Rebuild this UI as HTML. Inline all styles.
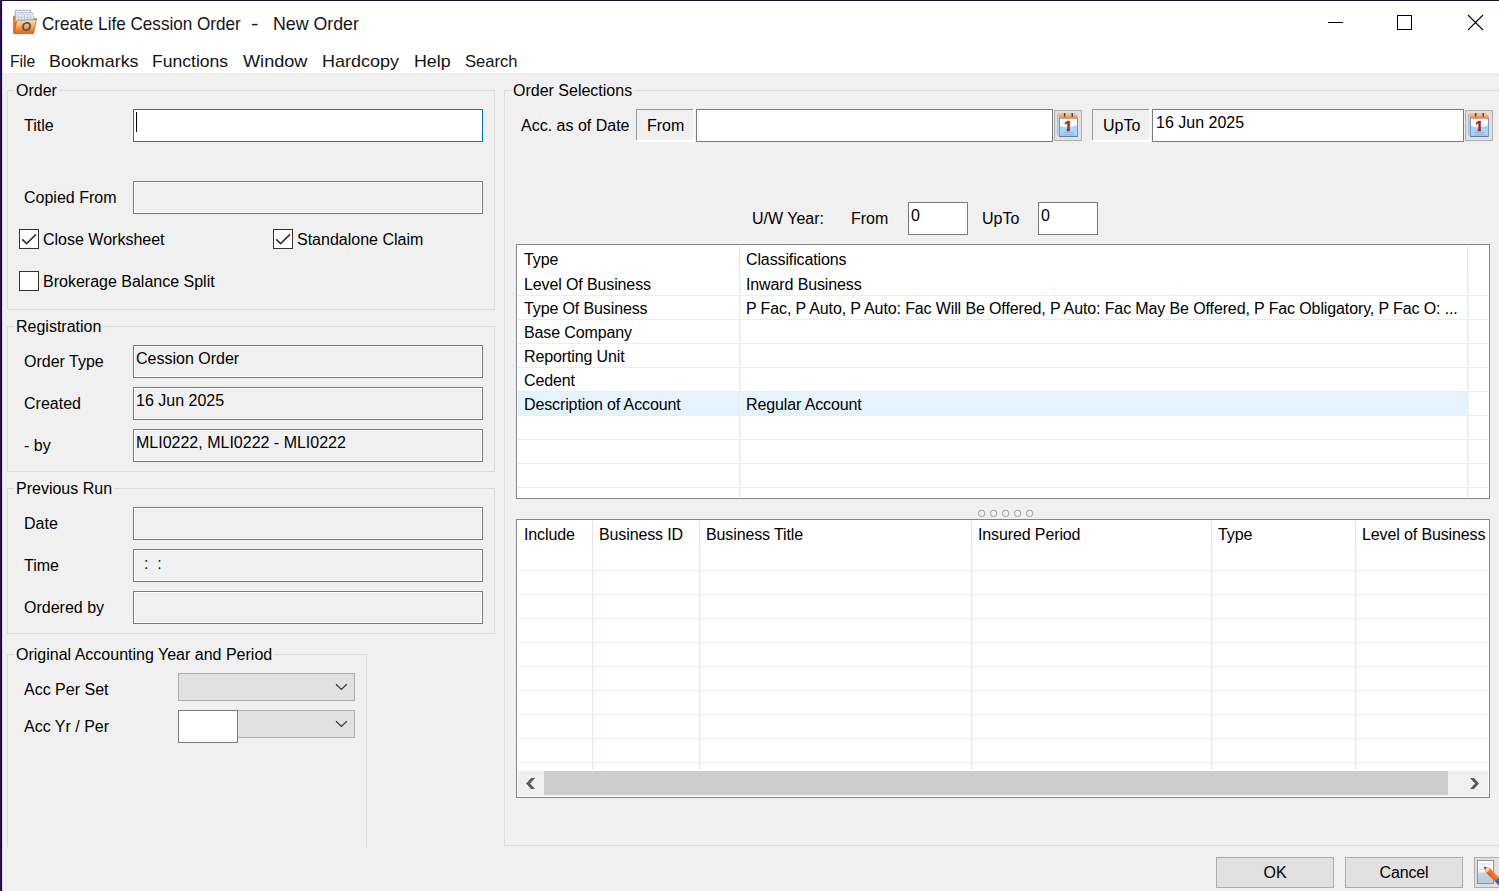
<!DOCTYPE html>
<html lang="en"><head><meta charset="utf-8"><title>Create Life Cession Order - New Order</title>
<style>
*{box-sizing:border-box;margin:0;padding:0}
html,body{width:1499px;height:891px;overflow:hidden;background:#f0f0f0}
body{position:relative;font-family:"Liberation Sans",sans-serif;font-size:16px;color:#000}
.a{position:absolute}
.t{position:absolute;white-space:nowrap;line-height:18px;height:18px;font-size:16px;color:#000}
.gb{position:absolute;border:1px solid #dcdcdc}
.gl{position:absolute;white-space:nowrap;line-height:18px;font-size:16px;background:#f0f0f0;padding:0 2px}
.ro{position:absolute;border:1px solid #7a7a7a;background:#f0f0f0;height:33px;box-shadow:inset 0 0 0 1px #fff}
.in{position:absolute;border:1px solid #7a7a7a;background:#fff}
.cb{position:absolute;width:20px;height:20px;border:1px solid #333;background:#fff}
.cmb{position:absolute;border:1px solid #adadad;background:#e1e1e1}
.btn{position:absolute;border:1px solid #adadad;background:#e1e1e1;text-align:center;font-size:16px}
.grid{position:absolute;border:1px solid #828790;background:#fff;overflow:hidden}
.hl{position:absolute;height:1px;background:#ededed}
.vl{position:absolute;width:2px;background:linear-gradient(90deg,#e2edf9 0,#e2edf9 50%,#f1f6fc 50%,#f1f6fc 100%)}
.vh{position:absolute;width:1px;background:#e5e5e5}
.g{letter-spacing:-0.12px}
.tt{font-family:"Liberation Sans",sans-serif}
</style></head>
<body>
<div class="a" style="left:0;top:0;width:1499px;height:73px;background:#fff"></div>
<div class="a" style="left:0;top:0;width:1499px;height:1px;background:#1b1033"></div>
<div class="a" style="left:0;top:0;width:3px;height:891px;background:linear-gradient(90deg,#2a0e52 0,#2a0e52 1px,#150e22 1px,#150e22 2px,rgba(30,25,40,0.10) 2px)"></div>
<svg class="a" style="left:12px;top:9px" width="26" height="26" viewBox="0 0 26 26">
<defs><linearGradient id="fo" x1="0" y1="0" x2="0" y2="1"><stop offset="0" stop-color="#ffe2bc"/><stop offset="0.5" stop-color="#fca458"/><stop offset="0.8" stop-color="#f07818"/><stop offset="1" stop-color="#e8640c"/></linearGradient>
<linearGradient id="sh" x1="0" y1="0" x2="0" y2="1"><stop offset="0" stop-color="#ffffff"/><stop offset="1" stop-color="#b8dcf8"/></linearGradient></defs>
<path d="M1.4 8.2 Q1.4 6.9 2.6 6.9 L4.2 6.9 L4.2 24.2 L2 24.4 Q1.4 24.4 1.4 23.6 Z" fill="#e8751c" stroke="#9c6a4c" stroke-width="0.6"/>
<path d="M21.6 9.2 L24 9.4 Q24.8 9.6 24.6 10.8 L21.6 11.4 Z" fill="#d8681c" stroke="#9c6a4c" stroke-width="0.5"/>
<rect x="3.3" y="1.3" width="15.4" height="12" rx="0.6" fill="#fff" stroke="#8494b4" stroke-width="0.8"/>
<path d="M6.6 1.6v2M9.6 1.6v2M12.6 1.6v2M15.6 1.6v2" stroke="#c0d0f0" stroke-width="0.6"/>
<rect x="5" y="3.5" width="15.6" height="11" rx="0.6" fill="#eef6ff" stroke="#a0aecc" stroke-width="0.7"/>
<path d="M8.2 3.8v2M11.2 3.8v2M14.2 3.8v2M17.2 3.8v2" stroke="#a8c0f0" stroke-width="0.6"/>
<rect x="6.6" y="5.6" width="15.2" height="9" rx="0.5" fill="url(#sh)" stroke="#a8b8d4" stroke-width="0.6"/>
<path d="M9.6 5.8v6M12.6 5.8v6M15.6 5.8v6M18.6 5.8v6M6.8 8.3h14.8" stroke="#88a8ec" stroke-width="0.7" opacity="0.75"/>
<path d="M4.9 11.4 L24.3 10.6 L21.8 24.2 Q21.7 24.7 21 24.7 L2.6 24.7 Q2 24.7 2.1 24 Z" fill="url(#fo)" stroke="#9a6c54" stroke-width="0.7" stroke-linejoin="round"/>
<text x="14" y="22.1" font-size="12.4" font-style="italic" font-weight="bold" fill="#44546c" text-anchor="middle" style="font-family:'Liberation Sans',sans-serif">O</text>
</svg>
<div class="t" style="left:41.8px;top:12px;font-size:18.5px;line-height:24px;height:24px;color:#141414;transform-origin:0 0;transform:scaleX(0.925)">Create Life Cession Order</div>
<div class="t" style="left:250.6px;top:12px;font-size:18.5px;line-height:24px;height:24px;color:#141414;transform-origin:0 0;transform:scaleX(1.2)">-</div>
<div class="t" style="left:273px;top:12px;font-size:18.5px;line-height:24px;height:24px;color:#141414;transform-origin:0 0;transform:scaleX(0.96)">New Order</div>
<div class="a" style="left:1328px;top:22px;width:15px;height:1px;background:#000"></div>
<div class="a" style="left:1397px;top:15px;width:15px;height:15px;border:1px solid #000"></div>
<svg class="a" style="left:1467px;top:14px" width="17" height="17" viewBox="0 0 17 17"><path d="M1 1L16 16M16 1L1 16" stroke="#000" stroke-width="1.1" fill="none"/></svg>
<div class="t" style="left:9.5px;top:50px;font-size:17px;line-height:24px;height:24px;color:#141414;transform-origin:0 0;transform:scaleX(0.923)">File</div>
<div class="t" style="left:48.9px;top:50px;font-size:17px;line-height:24px;height:24px;color:#141414;transform-origin:0 0;transform:scaleX(1.053)">Bookmarks</div>
<div class="t" style="left:151.9px;top:50px;font-size:17px;line-height:24px;height:24px;color:#141414;transform-origin:0 0;transform:scaleX(1.033)">Functions</div>
<div class="t" style="left:242.5px;top:50px;font-size:17px;line-height:24px;height:24px;color:#141414;transform-origin:0 0;transform:scaleX(1.066)">Window</div>
<div class="t" style="left:322px;top:50px;font-size:17px;line-height:24px;height:24px;color:#141414;transform-origin:0 0;transform:scaleX(1.06)">Hardcopy</div>
<div class="t" style="left:414.4px;top:50px;font-size:17px;line-height:24px;height:24px;color:#141414;transform-origin:0 0;transform:scaleX(1.048)">Help</div>
<div class="t" style="left:464.5px;top:50px;font-size:17px;line-height:24px;height:24px;color:#141414;transform-origin:0 0;transform:scaleX(0.975)">Search</div>
<div class="gb" style="left:7px;top:90px;width:488px;height:220px"></div>
<div class="gl" style="left:14px;top:82px">Order</div>
<div class="gb" style="left:7px;top:326px;width:488px;height:146px"></div>
<div class="gl" style="left:14px;top:318px">Registration</div>
<div class="gb" style="left:7px;top:488px;width:488px;height:146px"></div>
<div class="gl" style="left:14px;top:480px">Previous Run</div>
<div class="gb" style="left:7px;top:654px;width:360px;height:193px;border-bottom:none"></div>
<div class="gl" style="left:14px;top:646px">Original Accounting Year and Period</div>
<div class="t" style="left:24px;top:117px;">Title</div>
<div class="in" style="left:133px;top:109px;width:350px;height:33px;border-color:#0078d7"></div>
<div class="a" style="left:136px;top:112px;width:1px;height:20px;background:#000"></div>
<div class="t" style="left:24px;top:189px;">Copied From</div>
<div class="ro" style="left:133px;top:181px;width:350px;height:33px"></div>
<div class="cb" style="left:19px;top:229px"></div>
<svg class="a" style="left:19px;top:229px" width="20" height="20" viewBox="0 0 20 20"><path d="M3.2 10.4L7.6 14.6L17 5.4" stroke="#333" stroke-width="1.6" fill="none"/></svg>
<div class="t" style="left:43px;top:231px;">Close Worksheet</div>
<div class="cb" style="left:273px;top:229px"></div>
<svg class="a" style="left:273px;top:229px" width="20" height="20" viewBox="0 0 20 20"><path d="M3.2 10.4L7.6 14.6L17 5.4" stroke="#333" stroke-width="1.6" fill="none"/></svg>
<div class="t" style="left:297px;top:231px;">Standalone Claim</div>
<div class="cb" style="left:19px;top:271px"></div>
<div class="t" style="left:43px;top:273px;">Brokerage Balance Split</div>
<div class="t" style="left:24px;top:353px;">Order Type</div>
<div class="ro" style="left:133px;top:345px;width:350px;height:33px"></div>
<div class="t" style="left:136px;top:350px;">Cession Order</div>
<div class="t" style="left:24px;top:395px;">Created</div>
<div class="ro" style="left:133px;top:387px;width:350px;height:33px"></div>
<div class="t" style="left:136px;top:392px;">16 Jun 2025</div>
<div class="t" style="left:24px;top:437px;">- by</div>
<div class="ro" style="left:133px;top:429px;width:350px;height:33px"></div>
<div class="t" style="left:136px;top:434px;">MLI0222, MLI0222 - MLI0222</div>
<div class="t" style="left:24px;top:515px;">Date</div>
<div class="ro" style="left:133px;top:507px;width:350px;height:33px"></div>
<div class="t" style="left:24px;top:557px;">Time</div>
<div class="ro" style="left:133px;top:549px;width:350px;height:33px"></div>
<div class="t" style="left:144px;top:555px;word-spacing:-0.1px;color:#1a1a1a">:&nbsp; :</div>
<div class="t" style="left:24px;top:599px;">Ordered by</div>
<div class="ro" style="left:133px;top:591px;width:350px;height:33px"></div>
<div class="t" style="left:24px;top:681px;">Acc Per Set</div>
<div class="cmb" style="left:178px;top:673px;width:177px;height:28px"></div>
<svg class="a" style="left:334px;top:682px" width="14" height="10" viewBox="0 0 14 10"><path d="M2 2.2L7.4 7.4L12.8 2.2" stroke="#333" stroke-width="1.2" fill="none"/></svg>
<div class="t" style="left:24px;top:718px;">Acc Yr / Per</div>
<div class="cmb" style="left:237px;top:710px;width:118px;height:28px"></div>
<svg class="a" style="left:334px;top:719px" width="14" height="10" viewBox="0 0 14 10"><path d="M2 2.2L7.4 7.4L12.8 2.2" stroke="#333" stroke-width="1.2" fill="none"/></svg>
<div class="in" style="left:178px;top:710px;width:60px;height:33px"></div>
<div class="gb" style="left:504px;top:90px;width:1001px;height:756px"></div>
<div class="gl" style="left:511px;top:82px">Order Selections</div>
<div class="a" style="left:504px;top:845px;width:995px;height:1px;background:#dcdcdc"></div>
<div class="t" style="left:521px;top:117px;">Acc. as of Date</div>
<div class="a" style="left:636px;top:109px;width:57px;height:1px;background:#9a9a9a"></div>
<div class="a" style="left:636px;top:109px;width:1px;height:31px;background:#9a9a9a"></div>
<div class="a" style="left:636px;top:140px;width:59px;height:2px;background:#fff"></div>
<div class="a" style="left:693px;top:109px;width:2px;height:31px;background:#f9f9f9"></div>
<div class="t" style="left:647px;top:117px;">From</div>
<div class="in" style="left:696px;top:109px;width:357px;height:33px"></div>
<div class="btn" style="left:1054px;top:110px;width:28px;height:31px"></div>
<svg class="a" style="left:1057px;top:113px" width="22" height="25" viewBox="0 0 22 25">
<defs><linearGradient id="cg1" x1="0" y1="0" x2="0" y2="1"><stop offset="0" stop-color="#ffffff"/><stop offset="1" stop-color="#e6effa"/></linearGradient>
<linearGradient id="co1" x1="0" y1="0" x2="0" y2="1"><stop offset="0" stop-color="#fbb47c"/><stop offset="1" stop-color="#f98528"/></linearGradient>
<clipPath id="cc1"><rect x="0" y="0" width="22" height="15.9"/><rect x="9.7" y="15.9" width="3.2" height="3"/></clipPath></defs>
<path d="M0.5 2 L2.6 3.4 L2.6 23.4 L0.5 21.8 Z" fill="#b4cfea" stroke="#8ea6c4" stroke-width="0.5"/>
<rect x="0.9" y="0.4" width="17.8" height="2.4" fill="#f7c49c" stroke="#d8a078" stroke-width="0.4"/>
<rect x="2.5" y="5" width="17.9" height="18.5" fill="url(#cg1)" stroke="#6483ad" stroke-width="0.8"/>
<path d="M2.9 13 Q11.4 15.6 20 12.6 L20 23.1 L2.9 23.1 Z" fill="#a6d4fd"/>
<path d="M2.5 23.4h17.9" stroke="#557aa8" stroke-width="0.9"/>
<rect x="2.3" y="1.9" width="18.3" height="3.4" fill="url(#co1)"/>
<path d="M2.3 5.2h18.3" stroke="#e07830" stroke-width="0.5"/>
<rect x="6.9" y="0" width="1.5" height="3.7" fill="#3c4550"/><rect x="14.5" y="0" width="1.5" height="3.7" fill="#3c4550"/>
<path d="M6.5 19.5h10M6.5 21.4h10" stroke="#84a8d0" stroke-width="0.7"/>
<text x="11.2" y="17.9" font-size="14.5" font-weight="bold" fill="#a42a16" stroke="#a42a16" stroke-width="0.5" text-anchor="middle" clip-path="url(#cc1)" style="font-family:'Liberation Sans',sans-serif">1</text>
</svg>
<div class="a" style="left:1092px;top:109px;width:57px;height:1px;background:#9a9a9a"></div>
<div class="a" style="left:1092px;top:109px;width:1px;height:31px;background:#9a9a9a"></div>
<div class="a" style="left:1092px;top:140px;width:59px;height:2px;background:#fff"></div>
<div class="a" style="left:1149px;top:109px;width:2px;height:31px;background:#f9f9f9"></div>
<div class="t" style="left:1103px;top:117px;">UpTo</div>
<div class="in" style="left:1152px;top:109px;width:312px;height:33px"></div>
<div class="t" style="left:1156px;top:114px;">16 Jun 2025</div>
<div class="btn" style="left:1465px;top:110px;width:28px;height:31px"></div>
<svg class="a" style="left:1468px;top:113px" width="22" height="25" viewBox="0 0 22 25">
<defs><linearGradient id="cg2" x1="0" y1="0" x2="0" y2="1"><stop offset="0" stop-color="#ffffff"/><stop offset="1" stop-color="#e6effa"/></linearGradient>
<linearGradient id="co2" x1="0" y1="0" x2="0" y2="1"><stop offset="0" stop-color="#fbb47c"/><stop offset="1" stop-color="#f98528"/></linearGradient>
<clipPath id="cc2"><rect x="0" y="0" width="22" height="15.9"/><rect x="9.7" y="15.9" width="3.2" height="3"/></clipPath></defs>
<path d="M0.5 2 L2.6 3.4 L2.6 23.4 L0.5 21.8 Z" fill="#b4cfea" stroke="#8ea6c4" stroke-width="0.5"/>
<rect x="0.9" y="0.4" width="17.8" height="2.4" fill="#f7c49c" stroke="#d8a078" stroke-width="0.4"/>
<rect x="2.5" y="5" width="17.9" height="18.5" fill="url(#cg2)" stroke="#6483ad" stroke-width="0.8"/>
<path d="M2.9 13 Q11.4 15.6 20 12.6 L20 23.1 L2.9 23.1 Z" fill="#a6d4fd"/>
<path d="M2.5 23.4h17.9" stroke="#557aa8" stroke-width="0.9"/>
<rect x="2.3" y="1.9" width="18.3" height="3.4" fill="url(#co2)"/>
<path d="M2.3 5.2h18.3" stroke="#e07830" stroke-width="0.5"/>
<rect x="6.9" y="0" width="1.5" height="3.7" fill="#3c4550"/><rect x="14.5" y="0" width="1.5" height="3.7" fill="#3c4550"/>
<path d="M6.5 19.5h10M6.5 21.4h10" stroke="#84a8d0" stroke-width="0.7"/>
<text x="11.2" y="17.9" font-size="14.5" font-weight="bold" fill="#a42a16" stroke="#a42a16" stroke-width="0.5" text-anchor="middle" clip-path="url(#cc2)" style="font-family:'Liberation Sans',sans-serif">1</text>
</svg>
<div class="t" style="left:752px;top:210px;">U/W Year:</div>
<div class="t" style="left:851px;top:210px;">From</div>
<div class="in" style="left:908px;top:202px;width:60px;height:33px"></div>
<div class="t" style="left:911px;top:207px;">0</div>
<div class="t" style="left:982px;top:210px;">UpTo</div>
<div class="in" style="left:1038px;top:202px;width:60px;height:33px"></div>
<div class="t" style="left:1041px;top:207px;">0</div>
<div class="grid" style="left:516px;top:244px;width:974px;height:255px"></div>
<div class="a" style="left:518px;top:392px;width:949px;height:24px;background:#e5f3ff"></div>
<div class="hl" style="left:518px;top:295px;width:970px"></div>
<div class="hl" style="left:518px;top:319px;width:970px"></div>
<div class="hl" style="left:518px;top:343px;width:970px"></div>
<div class="hl" style="left:518px;top:367px;width:970px"></div>
<div class="hl" style="left:518px;top:391px;width:970px"></div>
<div class="hl" style="left:518px;top:415px;width:970px"></div>
<div class="hl" style="left:518px;top:439px;width:970px"></div>
<div class="hl" style="left:518px;top:463px;width:970px"></div>
<div class="hl" style="left:518px;top:487px;width:970px"></div>
<div class="vh" style="left:739px;top:246px;height:26px"></div>
<div class="vl" style="left:739px;top:272px;height:225px"></div>
<div class="vh" style="left:1467px;top:246px;height:26px"></div>
<div class="vl" style="left:1467px;top:272px;height:225px"></div>
<div class="t" style="left:524px;top:251px;letter-spacing:-0.12px">Type</div>
<div class="t" style="left:746px;top:251px;letter-spacing:-0.12px">Classifications</div>
<div class="t" style="left:524px;top:276px;letter-spacing:-0.12px">Level Of Business</div>
<div class="t" style="left:746px;top:276px;letter-spacing:-0.12px">Inward Business</div>
<div class="t" style="left:524px;top:300px;letter-spacing:-0.12px">Type Of Business</div>
<div class="t" style="left:746px;top:300px;letter-spacing:-0.12px">P Fac, P Auto, P Auto: Fac Will Be Offered, P Auto: Fac May Be Offered, P Fac Obligatory, P Fac O: ...</div>
<div class="t" style="left:524px;top:324px;letter-spacing:-0.12px">Base Company</div>
<div class="t" style="left:524px;top:348px;letter-spacing:-0.12px">Reporting Unit</div>
<div class="t" style="left:524px;top:372px;letter-spacing:-0.12px">Cedent</div>
<div class="t" style="left:524px;top:396px;letter-spacing:-0.12px">Description of Account</div>
<div class="t" style="left:746px;top:396px;letter-spacing:-0.12px">Regular Account</div>
<svg class="a" style="left:976px;top:508px" width="60" height="11" viewBox="0 0 60 11"><circle cx="5.6" cy="5.4" r="3.2" fill="none" stroke="#8a8a8a" stroke-width="0.8"/><circle cx="17.6" cy="5.4" r="3.2" fill="none" stroke="#8a8a8a" stroke-width="0.8"/><circle cx="29.6" cy="5.4" r="3.2" fill="none" stroke="#8a8a8a" stroke-width="0.8"/><circle cx="41.6" cy="5.4" r="3.2" fill="none" stroke="#8a8a8a" stroke-width="0.8"/><circle cx="53.6" cy="5.4" r="3.2" fill="none" stroke="#8a8a8a" stroke-width="0.8"/></svg>
<div class="grid" style="left:516px;top:519px;width:974px;height:279px"></div>
<div class="hl" style="left:518px;top:570px;width:970px"></div>
<div class="hl" style="left:518px;top:594px;width:970px"></div>
<div class="hl" style="left:518px;top:618px;width:970px"></div>
<div class="hl" style="left:518px;top:642px;width:970px"></div>
<div class="hl" style="left:518px;top:666px;width:970px"></div>
<div class="hl" style="left:518px;top:690px;width:970px"></div>
<div class="hl" style="left:518px;top:714px;width:970px"></div>
<div class="hl" style="left:518px;top:738px;width:970px"></div>
<div class="hl" style="left:518px;top:762px;width:970px"></div>
<div class="vh" style="left:592px;top:521px;height:26px"></div>
<div class="vl" style="left:592px;top:547px;height:223px"></div>
<div class="vh" style="left:699px;top:521px;height:26px"></div>
<div class="vl" style="left:699px;top:547px;height:223px"></div>
<div class="vh" style="left:971px;top:521px;height:26px"></div>
<div class="vl" style="left:971px;top:547px;height:223px"></div>
<div class="vh" style="left:1211px;top:521px;height:26px"></div>
<div class="vl" style="left:1211px;top:547px;height:223px"></div>
<div class="vh" style="left:1355px;top:521px;height:26px"></div>
<div class="vl" style="left:1355px;top:547px;height:223px"></div>
<div class="t" style="left:524px;top:526px;letter-spacing:-0.12px">Include</div>
<div class="t" style="left:599px;top:526px;letter-spacing:-0.12px">Business ID</div>
<div class="t" style="left:706px;top:526px;letter-spacing:-0.12px">Business Title</div>
<div class="t" style="left:978px;top:526px;letter-spacing:-0.12px">Insured Period</div>
<div class="t" style="left:1218px;top:526px;letter-spacing:-0.12px">Type</div>
<div class="t" style="left:1362px;top:526px;letter-spacing:-0.12px">Level of Business</div>
<div class="a" style="left:518px;top:771px;width:970px;height:25px;background:#f0f0f0"></div>
<div class="a" style="left:544px;top:771px;width:904px;height:24px;background:#cdcdcd"></div>
<svg class="a" style="left:520px;top:774px" width="20" height="20" viewBox="520 774 20 20"><polygon points="526.1,783.5 531.2,778.1 535.1,778.1 530,783.5 535.1,789 531.2,789" fill="#595959"/></svg>
<svg class="a" style="left:1465px;top:774px" width="20" height="20" viewBox="1465 774 20 20"><polygon points="1479,783.5 1473.9,778.1 1470,778.1 1475.1,783.5 1470,789 1473.9,789" fill="#595959"/></svg>
<div class="btn" style="left:1216px;top:857px;width:118px;height:31px;line-height:29px">OK</div>
<div class="btn" style="left:1345px;top:857px;width:118px;height:31px;line-height:29px;letter-spacing:-0.15px">Cancel</div>
<div class="btn" style="left:1474px;top:857px;width:30px;height:31px"></div>
<svg class="a" style="left:1476px;top:859px" width="23" height="27" viewBox="0 0 23 27">
<defs><linearGradient id="pg" x1="0" y1="0" x2="0" y2="1"><stop offset="0" stop-color="#ffffff"/><stop offset="0.5" stop-color="#eef2f4"/><stop offset="0.55" stop-color="#c4d8e0"/><stop offset="1" stop-color="#b4ccd6"/></linearGradient>
<linearGradient id="pn" x1="0" y1="1" x2="1" y2="0"><stop offset="0" stop-color="#c83808"/><stop offset="0.45" stop-color="#f06420"/><stop offset="1" stop-color="#ffc090"/></linearGradient></defs>
<rect x="1.4" y="1.4" width="16.2" height="23.2" fill="url(#pg)" stroke="#7888a0" stroke-width="0.9"/>
<path d="M3.4 5h12.4M3.4 10.6h5" stroke="#d4dce2" stroke-width="1"/>
<path d="M8 7.8 L14.4 9.6 L10.6 14.2 Z" fill="#ffd098" stroke="#806050" stroke-width="0.4"/><path d="M8 7.8 L10.7 8.6 L9.1 10.5 Z" fill="#3c3c3c"/>
<path d="M14.4 9.6 L23 18.3 L23 23 L19 22.6 L10.6 14.2 Z" fill="url(#pn)"/>
<path d="M19 22.6 L23 18.6 L23 27 L22.4 26 Z" fill="#3858b8"/>
</svg>
</body></html>
